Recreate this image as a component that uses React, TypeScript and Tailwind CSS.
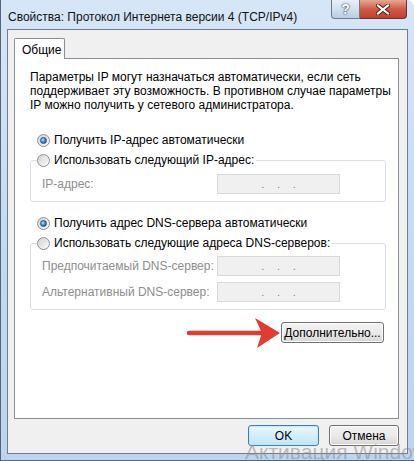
function Radio({ checked }: { checked?: boolean }) {
  return (
    <span className="relative inline-flex w-[13px] h-[13px] shrink-0 items-center justify-center rounded-full border border-[#8e8f8f] bg-gradient-to-br from-[#d2d2d2] to-[#fbfbfb]">
      {checked && (
        <span className="w-[7px] h-[7px] rounded-full border border-[#1f4f7f] bg-[radial-gradient(circle_at_35%_35%,#b6e3ff,#2c7bc4_60%,#134f8c)]"></span>
      )}
    </span>
  );
}

function RadioRow({ checked, label }: { checked?: boolean; label: string }) {
  return (
    <div className="flex items-center h-[16px] gap-[4px] whitespace-nowrap">
      <Radio checked={checked} />
      <span>{label}</span>
    </div>
  );
}

function IpBox() {
  return (
    <div className="w-[123px] h-[20px] border border-[#d9d9d9] bg-[#f0f0f0] flex items-center justify-around px-[14px] text-[#808080] text-[11px]">
      <span className="w-[10px]"></span>
      <span>.</span>
      <span>.</span>
      <span>.</span>
      <span className="w-[10px]"></span>
    </div>
  );
}

function Field({ label }: { label: string }) {
  return (
    <div className="flex items-center">
      <span className="w-[175px] text-[#8d8d8d] whitespace-nowrap">{label}</span>
      <IpBox />
    </div>
  );
}

function WinButton({ label, primary }: { label: string; primary?: boolean }) {
  return (
    <button
      className={
        primary
          ? "h-[21px] w-[71px] rounded-[3px] border border-[#3c7fb1] bg-gradient-to-b from-[#eaf6fd] to-[#bee6fd] shadow-[inset_0_0_0_1px_#c7e7fa] text-black"
          : "h-[21px] w-[70px] rounded-[3px] border border-[#707070] bg-gradient-to-b from-[#f2f2f2] via-[#ebebeb] to-[#d6d6d6] shadow-[inset_0_0_0_1px_#fcfcfc] text-black"
      }
    >
      {label}
    </button>
  );
}

export default function App() {
  return (
    <div
      className="relative w-[414px] h-[461px] overflow-hidden bg-gradient-to-b from-[#d7e6f7] via-[#c6daf1] to-[#bed4ee] border-l border-b border-[#55657a] rounded-tr-[8px] flex flex-col text-[12px] text-black"
      style={{ fontFamily: '"Liberation Sans", Arial, sans-serif' }}
    >
      {/* Title bar */}
      <div className="h-[29px] flex items-start shrink-0">
        <div className="pl-[7px] pt-[8px] text-[12px] text-[#111] whitespace-nowrap">Свойства: Протокол Интернета версии 4 (TCP/IPv4)</div>
        <div className="ml-auto mr-[7px] flex">
          <div className="w-[29px] h-[19px] rounded-bl-[4px] border border-t-0 border-[#6d7b8c] bg-gradient-to-b from-[#e8f0f9] via-[#d3e0ef] to-[#b9cde4] flex items-center justify-center font-bold text-[14px] text-white [text-shadow:0_0_2px_#2c3a4b,0_0_1px_#2c3a4b]">
            ?
          </div>
          <div className="w-[47px] h-[19px] rounded-br-[4px] border border-l-0 border-t-0 border-[#6d3030] bg-gradient-to-b from-[#e5a695] via-[#cf5a48] to-[#c2402d] flex items-center justify-center">
            <svg width="14" height="11" viewBox="0 0 14 11">
              <path d="M2 1.5 L12 9.5 M12 1.5 L2 9.5" stroke="#4a1a16" strokeWidth="4" strokeLinecap="square" />
              <path d="M2 1.5 L12 9.5 M12 1.5 L2 9.5" stroke="#ffffff" strokeWidth="2.2" strokeLinecap="square" />
            </svg>
          </div>
        </div>
      </div>

      {/* Client area */}
      <div className="mx-[6px] mb-[6px] flex-1 border border-[#6e7d8f] bg-[#f0f0f0] flex flex-col pl-[6px] pr-[8px] pt-[8px]">
        {/* Tabs */}
        <div className="flex h-[20px]">
          <div className="relative z-10 w-[51px] h-[21px] border border-b-0 border-[#898c95] bg-white rounded-t-[2px] pl-[7px] pt-[2px]">
            Общие
          </div>
        </div>
        {/* Tab panel */}
        <div className="h-[361px] border border-[#898c95] bg-white pt-[11px] pl-[15px] pr-[12px]">
          <p className="leading-[14px] whitespace-nowrap">
            Параметры IP могут назначаться автоматически, если сеть
            <br />
            поддерживает эту возможность. В противном случае параметры
            <br />
            IP можно получить у сетевого администратора.
          </p>

          <div className="mt-[20px] ml-[7px]">
            <RadioRow checked label="Получить IP-адрес автоматически" />
          </div>

          <fieldset className="mt-[4px] border border-[#d5dfe5] rounded-[3px] px-[11px] pt-[6px] pb-[7px]">
            <legend className="-ml-[5px] pr-[2px]">
              <RadioRow label="Использовать следующий IP-адрес:" />
            </legend>
            <Field label="IP-адрес:" />
          </fieldset>

          <div className="mt-[13px] ml-[7px]">
            <RadioRow checked label="Получить адрес DNS-сервера автоматически" />
          </div>

          <fieldset className="mt-[4px] border border-[#d5dfe5] rounded-[3px] px-[11px] pt-[5px] pb-[7px] flex flex-col gap-[6px]">
            <legend className="-ml-[5px] pr-[2px]">
              <RadioRow label="Использовать следующие адреса DNS-серверов:" />
            </legend>
            <Field label="Предпочитаемый DNS-сервер:" />
            <Field label="Альтернативный DNS-сервер:" />
          </fieldset>

          <div className="mt-[12px] flex justify-end pr-[2px]">
            <button className="h-[21px] w-[103px] rounded-[3px] border border-[#707070] bg-gradient-to-b from-[#f2f2f2] via-[#ebebeb] to-[#d6d6d6] shadow-[inset_0_0_0_1px_#fcfcfc] whitespace-nowrap">
              Дополнительно...
            </button>
          </div>
        </div>

        {/* Dialog buttons */}
        <div className="mt-[6px] flex justify-end gap-[10px]">
          <WinButton primary label="OK" />
          <WinButton label="Отмена" />
        </div>
      </div>

      {/* Red arrow annotation */}
      <svg className="absolute left-[184px] top-[315px]" width="100" height="36" viewBox="0 0 100 36">
        <path d="M4 18 L80 18" stroke="#e53a2f" strokeWidth="4.5" strokeLinecap="round" />
        <path d="M95 18 L70 3 L77 18 L72 33 Z" fill="#e53a2f" />
      </svg>

      {/* Activation watermark */}
      <div className="absolute left-[244px] top-[436px] whitespace-nowrap text-[21px] text-[rgba(140,140,140,0.55)]">
        Активация Windows
      </div>
    </div>
  );
}
